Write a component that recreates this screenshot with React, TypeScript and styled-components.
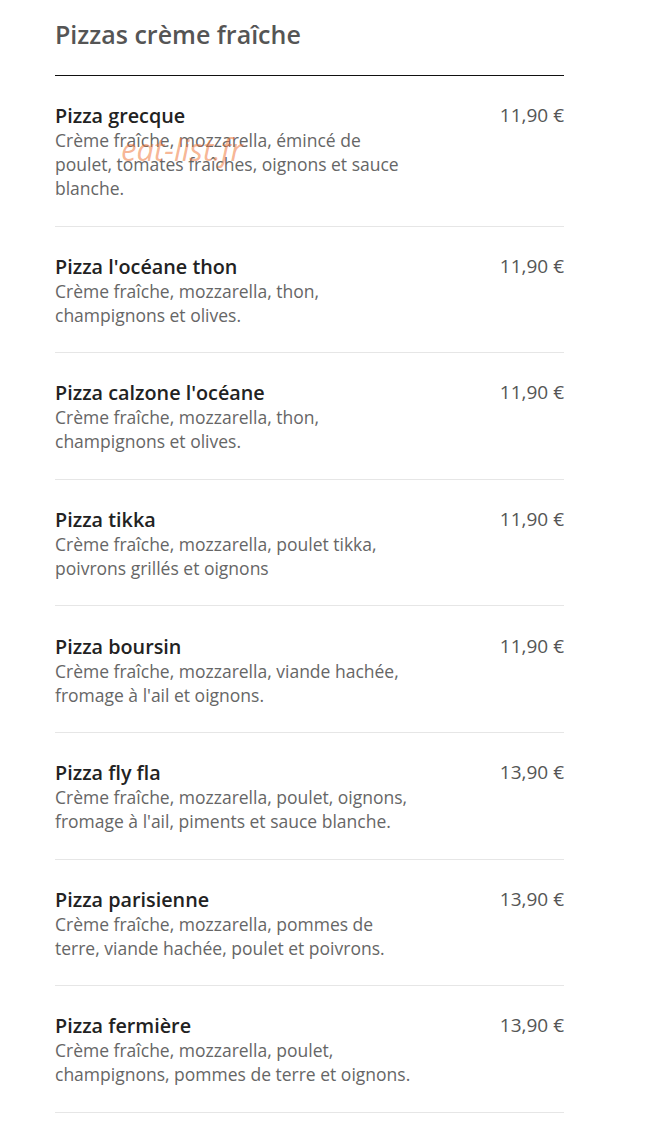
import React from 'react';
import styled, { createGlobalStyle } from 'styled-components';

const GlobalStyle = createGlobalStyle`
  body {
    margin: 0;
    background: #fff;
    font-family: 'Open Sans', 'Noto Sans', sans-serif;
  }
`;

const Page = styled.main`
  width: 509px;
  padding: 0 55px;
`;

const SectionHeader = styled.header`
  padding-top: 18px;
  height: 57px;
  border-bottom: 1px solid #111;
`;

const SectionTitle = styled.h2`
  margin: 0;
  font-size: 25px;
  line-height: 32px;
  font-weight: 600;
  color: #555;
`;

const List = styled.ul`
  list-style: none;
  margin: 0;
  padding: 0;
`;

const Item = styled.li`
  position: relative;
  display: flex;
  justify-content: space-between;
  align-items: flex-start;
  padding: 27.3px 0 25.3px;
  border-bottom: 1px solid #e6e6e6;
`;

const Info = styled.div`
  width: 359px;
`;

const Name = styled.h3`
  margin: 0;
  font-size: 19.8px;
  line-height: 25px;
  font-weight: 600;
  color: #222;
`;

const Description = styled.p`
  margin: 0;
  font-size: 17.5px;
  line-height: 24px;
  color: #666;
`;

const Price = styled.span`
  font-size: 19px;
  line-height: 25px;
  font-weight: 500;
  color: #555;
  white-space: nowrap;
`;

const Watermark = styled.span`
  position: absolute;
  left: 66px;
  top: 52px;
  font-size: 31px;
  font-style: italic;
  color: rgba(240, 120, 60, 0.55);
  pointer-events: none;
`;

type Pizza = { name: string; description: string; price: string };

const pizzas: Pizza[] = [
  {
    name: 'Pizza grecque',
    description: 'Crème fraîche, mozzarella, émincé de poulet, tomates fraîches, oignons et sauce blanche.',
    price: '11,90 €',
  },
  {
    name: "Pizza l'océane thon",
    description: 'Crème fraîche, mozzarella, thon, champignons et olives.',
    price: '11,90 €',
  },
  {
    name: "Pizza calzone l'océane",
    description: 'Crème fraîche, mozzarella, thon, champignons et olives.',
    price: '11,90 €',
  },
  {
    name: 'Pizza tikka',
    description: 'Crème fraîche, mozzarella, poulet tikka, poivrons grillés et oignons',
    price: '11,90 €',
  },
  {
    name: 'Pizza boursin',
    description: "Crème fraîche, mozzarella, viande hachée, fromage à l'ail et oignons.",
    price: '11,90 €',
  },
  {
    name: 'Pizza fly fla',
    description: "Crème fraîche, mozzarella, poulet, oignons, fromage à l'ail, piments et sauce blanche.",
    price: '13,90 €',
  },
  {
    name: 'Pizza parisienne',
    description: 'Crème fraîche, mozzarella, pommes de terre, viande hachée, poulet et poivrons.',
    price: '13,90 €',
  },
  {
    name: 'Pizza fermière',
    description: 'Crème fraîche, mozzarella, poulet, champignons, pommes de terre et oignons.',
    price: '13,90 €',
  },
];

const App = () => (
  <>
    <GlobalStyle />
    <Page>
      <SectionHeader>
        <SectionTitle>Pizzas crème fraîche</SectionTitle>
      </SectionHeader>
      <List>
        {pizzas.map((pizza, i) => (
          <Item key={pizza.name}>
            <Info>
              <Name>{pizza.name}</Name>
              <Description>{pizza.description}</Description>
            </Info>
            <Price>{pizza.price}</Price>
            {i === 0 && <Watermark>eat-list.fr</Watermark>}
          </Item>
        ))}
      </List>
    </Page>
  </>
);

export default App;
